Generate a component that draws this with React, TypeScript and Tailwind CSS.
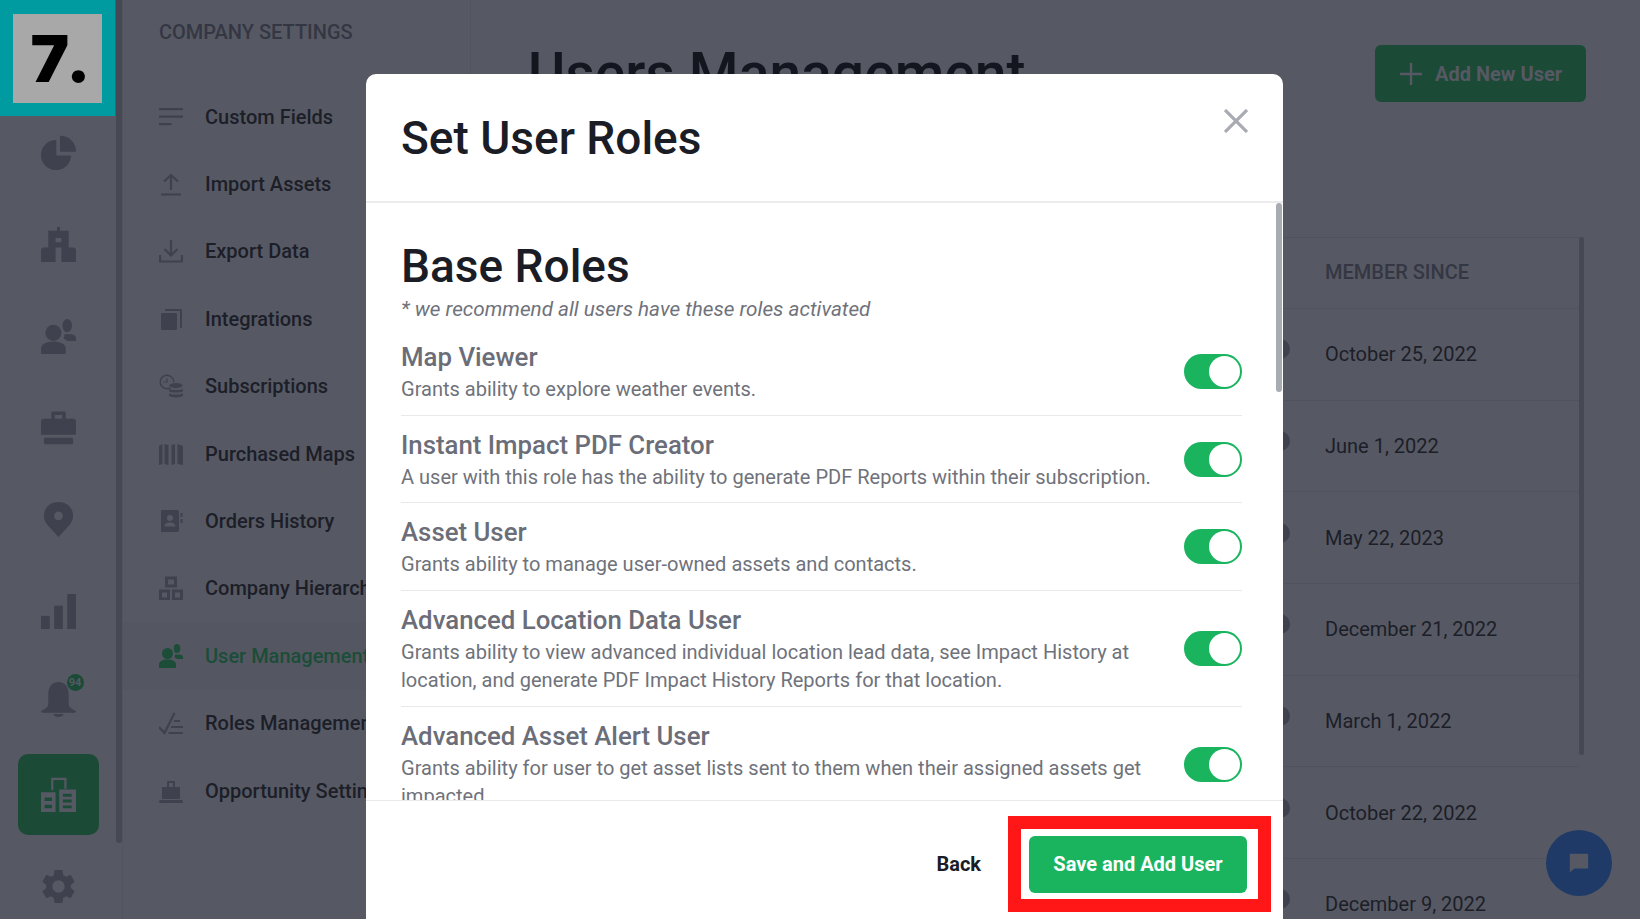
import { MdSettings } from "react-icons/md"

const roles = [
  { title: "Map Viewer", text: "Grants ability to explore weather events." },
  { title: "Instant Impact PDF Creator", text: "A user with this role has the ability to generate PDF Reports within their subscription." },
  { title: "Asset User", text: "Grants ability to manage user-owned assets and contacts." },
  { title: "Advanced Location Data User", text: "Grants ability to view advanced individual location lead data, see Impact History at location, and generate PDF Impact History Reports for that location." },
  { title: "Advanced Asset Alert User", text: "Grants ability for user to get asset lists sent to them when their assigned assets get impacted" },
]

const dates = ["October 25, 2022", "June 1, 2022", "May 22, 2023", "December 21, 2022", "March 1, 2022", "October 22, 2022", "December 9, 2022"]

function UsersIcon({ className }: { className: string }) {
  return (
    <svg viewBox="0 0 24 24" fill="currentColor" className={className}>
      <circle cx="8.500" cy="9.500" r="5.500" />
      <path d="M0 24v-3.500c0-3 3.500-5 8.500-5s8.500 2 8.500 5V24H0z" />
      <ellipse cx="18" cy="4.500" rx="3.300" ry="4.500" />
      <path d="M16 10.500h4c2.500 0 4 1 4 2.800V15h-6c-.8-.7-1.500-1.200-2.500-1.600.5-.8.6-1.800.5-2.900z" />
    </svg>
  )
}

function Rail({ children }: { children: React.ReactNode }) {
  return <div className="flex h-[91.7px] items-center justify-center text-[#3f424e]">{children}</div>
}

const navIcons: Record<string, React.ReactNode> = {
  "Custom Fields": (
    <svg viewBox="0 0 24 24" fill="currentColor" className="h-6 w-6">
      <rect x="0" y="3" width="24" height="2.200" /><rect x="0" y="10.500" width="24" height="2.200" /><rect x="0" y="18" width="12.500" height="2.200" />
    </svg>
  ),
  "Import Assets": (
    <svg viewBox="0 0 24 24" fill="none" stroke="currentColor" strokeWidth="2.200" className="h-6 w-6">
      <path d="M12 18V3M5 9.500 12 3l7 6.500M2 22.500h20" />
    </svg>
  ),
  "Export Data": (
    <svg viewBox="0 0 24 24" fill="none" stroke="currentColor" strokeWidth="2.200" className="h-6 w-6">
      <path d="M12 1v15M5.500 10l6.500 6.500 6.500-6.500M1 16v6.500h22V16" />
    </svg>
  ),
  Integrations: (
    <svg viewBox="0 0 24 24" fill="currentColor" className="h-6 w-6">
      <rect x="2" y="6" width="16" height="17" rx="1" /><path d="M6 2h17v19h-2V4H6z" />
    </svg>
  ),
  Subscriptions: (
    <svg viewBox="0 0 24 24" className="h-6 w-6">
      <circle cx="8" cy="8" r="6.800" fill="none" stroke="currentColor" strokeWidth="1.500" />
      <path d="M8 4.500V8H4.500" fill="none" stroke="currentColor" strokeWidth="1.200" />
      <ellipse cx="17" cy="11.500" rx="7" ry="3" fill="currentColor" stroke="#565963" />
      <path d="M10 14.500c1 2 13 2 14 0v2.500c-1 2-13 2-14 0zM10 19c1 2 13 2 14 0v2.500c-1 2.500-13 2.500-14 0z" fill="currentColor" />
    </svg>
  ),
  "Purchased Maps": (
    <svg viewBox="0 0 24 24" fill="currentColor" className="h-6 w-6">
      <path d="M0 4l3.500-2v20L0 23zM5.500 2 9.500 3v20l-4-1zM12.500 3l3.500-1v20l-3.500 1zM18.500 2 24 4v19l-5.500-1z" />
    </svg>
  ),
  "Orders History": (
    <svg viewBox="0 0 24 24" fill="currentColor" className="h-6 w-6">
      <path fillRule="evenodd" d="M2 1h16a2 2 0 0 1 2 2v18a2 2 0 0 1-2 2H2zM11 6a3 3 0 1 0 0 6 3 3 0 0 0 0-6zM5.500 17.500h11c0-2.500-2.500-4-5.500-4s-5.500 1.500-5.500 4z" />
      <rect x="21.500" y="4" width="2" height="4" /><rect x="21.500" y="10" width="2" height="4" />
    </svg>
  ),
  "Company Hierarchy": (
    <svg viewBox="0 0 24 24" fill="none" stroke="currentColor" strokeWidth="3" className="h-6 w-6">
      <rect x="7.500" y="2" width="9" height="8" /><rect x="1.500" y="15" width="8" height="8" /><rect x="14.500" y="15" width="8" height="8" />
    </svg>
  ),
  "User Management": <UsersIcon className="h-6 w-6" />,
  "Roles Management": (
    <svg viewBox="0 0 24 24" fill="none" stroke="currentColor" strokeWidth="2.200" className="h-6 w-6">
      <path d="M0 16l5.500 6L15.500 2M15 10h6M12 16h12M9.500 22H24" />
    </svg>
  ),
  "Opportunity Settings": (
    <svg viewBox="0 0 24 24" fill="currentColor" className="h-6 w-6">
      <path fillRule="evenodd" d="M3 8h5V3a1 1 0 0 1 1-1h6a1 1 0 0 1 1 1v5h5v12H3zM10 4v4h4V4z" />
      <rect x="0" y="21" width="24" height="3" rx="1.500" />
    </svg>
  ),
}

function Toggle() {
  return (
    <div className="flex h-[35px] w-[58px] shrink-0 items-center justify-end rounded-full bg-[#1ab45f] pr-[2px]">
      <div className="h-[31px] w-[31px] rounded-full bg-white" />
    </div>
  )
}

export default function App() {
  return (
    <div className="relative h-[924px] w-full overflow-hidden bg-white font-['Roboto',sans-serif]">
      <div className="flex h-[919px] bg-[#565963]">
        {/* icon rail */}
        <aside className="flex w-[122px] shrink-0">
          <div className="w-[116px] pt-[107px]">
            <Rail>
              <svg viewBox="0 0 24 24" fill="currentColor" className="h-[35px] w-[35px]">
                <path d="M10.500 3.500A10.300 10.300 0 1 0 20.600 14H10.500z" /><path d="M13 .5a10.800 10.800 0 0 1 11 11H13z" />
              </svg>
            </Rail>
            <Rail>
              <svg viewBox="0 0 24 24" fill="currentColor" className="h-[35px] w-[35px]">
                <path fillRule="evenodd" d="M11 0h2v2.500h6V14h3a2 2 0 0 1 2 2v8H0v-8a2 2 0 0 1 2-2h3V2.500h6zM10 7.500v3h4v-3zM10 14v10h4V14z" />
              </svg>
            </Rail>
            <Rail><UsersIcon className="h-[35px] w-[35px]" /></Rail>
            <Rail>
              <svg viewBox="0 0 24 24" fill="currentColor" className="h-[35px] w-[35px]">
                <path fillRule="evenodd" d="M7 6V2a1 1 0 0 1 1-1h8a1 1 0 0 1 1 1v4h5a2 2 0 0 1 2 2v9H0V8a2 2 0 0 1 2-2zm2.500-2.500V6h5V3.500z" />
                <rect x="2" y="19" width="20" height="4.500" rx="1" />
              </svg>
            </Rail>
            <Rail>
              <svg viewBox="0 0 24 24" fill="currentColor" className="h-[35px] w-[35px]">
                <path fillRule="evenodd" d="M12 0c6 0 10 4 10 9.500 0 3.500-2 6-4.500 8.500L12 24l-5.500-6C4 15.500 2 13 2 9.500 2 4 6 0 12 0zm0 6.500a3 3 0 1 0 0 6 3 3 0 0 0 0-6z" />
              </svg>
            </Rail>
            <Rail>
              <svg viewBox="0 0 24 24" fill="currentColor" className="h-[35px] w-[35px]">
                <rect x="0" y="15" width="6" height="9" /><rect x="9" y="8" width="6" height="16" /><rect x="18" y="0" width="6" height="24" />
              </svg>
            </Rail>
            <Rail>
              <div className="relative -mt-[7px] h-[35px] w-[35px]">
                <svg viewBox="0 0 24 24" fill="currentColor" className="h-[35px] w-[35px]">
                  <path d="M12 0c4.500 0 7 3.500 7 8.500V15c0 2 2 3.500 4.500 4.500.8.500.5 1.500-.5 1.500H1c-1 0-1.300-1-.5-1.500C3 18.500 5 17 5 15V8.500C5 3.500 7.500 0 12 0zM8.500 22h7c-.5 1.500-2 2-3.500 2s-3-.5-3.500-2z" />
                </svg>
                <div className="absolute -right-[8px] -top-[8px] flex h-[17px] w-[17px] items-center justify-center rounded-full bg-[#1b4a37] text-[11px] font-bold leading-none text-[#565963]">
                  94
                </div>
              </div>
            </Rail>
            <Rail>
              <div className="flex h-[81px] w-[81px] items-center justify-center rounded-[10px] bg-[#1b4a37] text-[#565963]">
                <svg viewBox="0 0 24 24" fill="currentColor" className="h-[35px] w-[35px]">
                  <path d="M7 9V.5h10.500V8H16V2H8.500v7z" />
                  <path fillRule="evenodd" d="M0 10.500h10V24H0zM2.500 14v2.500h5V14zM2.500 19v2.500h5V19zM12.500 8.500H24V24H12.500zM15 11.500v2h6v-2zM15 15.500v2h6v-2zM15 19.500v2h6v-2z" />
                </svg>
              </div>
            </Rail>
            <Rail><MdSettings className="h-[41px] w-[41px]" /></Rail>
          </div>
          <div className="h-[843px] w-[6px] rounded-b bg-[#464853]" />
        </aside>

        {/* settings nav */}
        <nav className="w-[349px] shrink-0 border-r border-l border-[#51545e]">
          <div className="h-[83px] pl-[36px] pt-[19px] text-[20px] font-medium leading-[26px] text-[#343743]">COMPANY SETTINGS</div>
          {Object.keys(navIcons).map((label) => {
            const active = label === "User Management"
            return (
              <div key={label} className={`flex h-[67.4px] items-center gap-[22px] pl-[36px] text-[20px] font-medium ${active ? "bg-[#545761] text-[#1b4d38]" : "text-[#1c1e28]"}`}>
                <span className={active ? "text-[#1b4d38]" : "text-[#3f424e]"}>{navIcons[label]}</span>
                <span className="whitespace-nowrap">{label}</span>
              </div>
            )
          })}
        </nav>

        {/* users page */}
        <main className="min-w-0 flex-1 pt-[45px]">
          <div className="flex items-start justify-between pl-[57px] pr-[54px]">
            <h1 className="text-[57px] font-medium leading-[57px] text-[#14161f]">Users Management</h1>
            <button className="flex h-[57px] w-[211px] items-center justify-center gap-3 rounded-md bg-[#1b4a37] text-[20px] font-bold text-[#565963]">
              <svg viewBox="0 0 24 24" fill="none" stroke="currentColor" strokeWidth="2.400" className="h-6 w-6">
                <path d="M12 1v22M1 12h22" />
              </svg>
              Add New User
            </button>
          </div>
          <div className="mt-[135px] flex pl-[57px]">
            <div className="flex-1 border-t border-[#50535d]">
              <div className="flex h-[71px] items-center justify-end border-b border-[#50535d]">
                <div className="-mt-[2px] w-[254px] text-[20px] font-medium text-[#343743]">MEMBER SINCE</div>
              </div>
              {dates.map((date) => (
                <div key={date} className="flex h-[91.7px] items-center justify-end border-b border-[#50535d]">
                  <div className="mb-[10px] mr-[35px] h-[20px] w-[20px] rounded-full bg-[#3f424e]" />
                  <div className="w-[254px] text-[20px] text-[#1c1e28]">{date}</div>
                </div>
              ))}
            </div>
            <div className="mr-[56px] h-[518px] w-[5px] rounded bg-[#464853]" />
          </div>
        </main>
      </div>

      {/* chat bubble */}
      <div className="absolute left-[1546px] top-[830px] flex h-[66px] w-[66px] items-center justify-center rounded-full bg-[#1f3a66]">
        <svg viewBox="0 0 24 24" fill="#565963" className="h-[22px] w-[22px]">
          <path d="M3 2h18a1 1 0 0 1 1 1v14a1 1 0 0 1-1 1H7l-5 4V3a1 1 0 0 1 1-1z" />
        </svg>
      </div>

      {/* modal */}
      <div className="absolute left-[366px] top-[74px] flex h-[845px] w-[917px] flex-col rounded-t-[10px] bg-white">
        <div className="flex h-[129px] shrink-0 items-start justify-between border-b-2 border-[#ececee] pl-[35px]">
          <h2 className="mt-[35px] text-[46px] font-medium leading-[58px] text-[#1a1c26]">Set User Roles</h2>
          <button className="mr-[35px] mt-[35px] text-[#a9abb2]">
            <svg viewBox="0 0 24 24" fill="none" stroke="currentColor" strokeWidth="3.200" className="h-[24px] w-[24px]">
              <path d="M1 1l22 22M23 1 1 23" />
            </svg>
          </button>
        </div>
        <div className="relative min-h-0 flex-1 overflow-hidden pl-[35px] pr-[41px] pt-[34px]">
          <h3 className="text-[46px] font-medium leading-[58px] text-[#1a1c26]">Base Roles</h3>
          <p className="mb-[5px] text-[20.7px] italic leading-[28px] text-[#6f727b]">* we recommend all users have these roles activated</p>
          {roles.map((role, i) => (
            <div key={role.title} className={`flex items-center justify-between py-[11.85px] ${i > 0 ? "border-t border-[#e9e9eb]" : ""}`}>
              <div className="flex-1 pr-[32px]">
                <div className="text-[25.8px] font-medium leading-[35px] text-[#6b6e78]">{role.title}</div>
                <div className="text-[20.05px] leading-[28px] text-[#6f727b]">{role.text}</div>
              </div>
              <Toggle />
            </div>
          ))}
          <div className="absolute right-[1px] top-0 h-[189px] w-[6px] rounded bg-[#a9abb2]" />
        </div>
        <div className="flex h-[119px] shrink-0 items-center justify-end gap-[27px] border-t border-[#e9e9eb] pr-[12px] pt-[8px]">
          <span className="text-[20px] font-bold text-[#1a1c26]">Back</span>
          <div className="flex h-[96px] w-[263px] items-center justify-center border-[13px] border-[#ff1616] bg-white pr-[3px]">
            <button className="flex h-[57px] w-[218px] items-center justify-center rounded-md bg-[#1ab45f] text-[20px] font-bold text-white">
              Save and Add User
            </button>
          </div>
        </div>
      </div>

      {/* step badge */}
      <div className="absolute left-0 top-0 flex h-[116px] w-[115px] items-center justify-center bg-[#009ba0]">
        <div className="flex h-[89px] w-[89px] items-center justify-center bg-[#a8a8a8] pl-[11px] font-['Inter',sans-serif] text-[65px] font-black leading-none tracking-[5px] text-black">
          7.
        </div>
      </div>
    </div>
  )
}
